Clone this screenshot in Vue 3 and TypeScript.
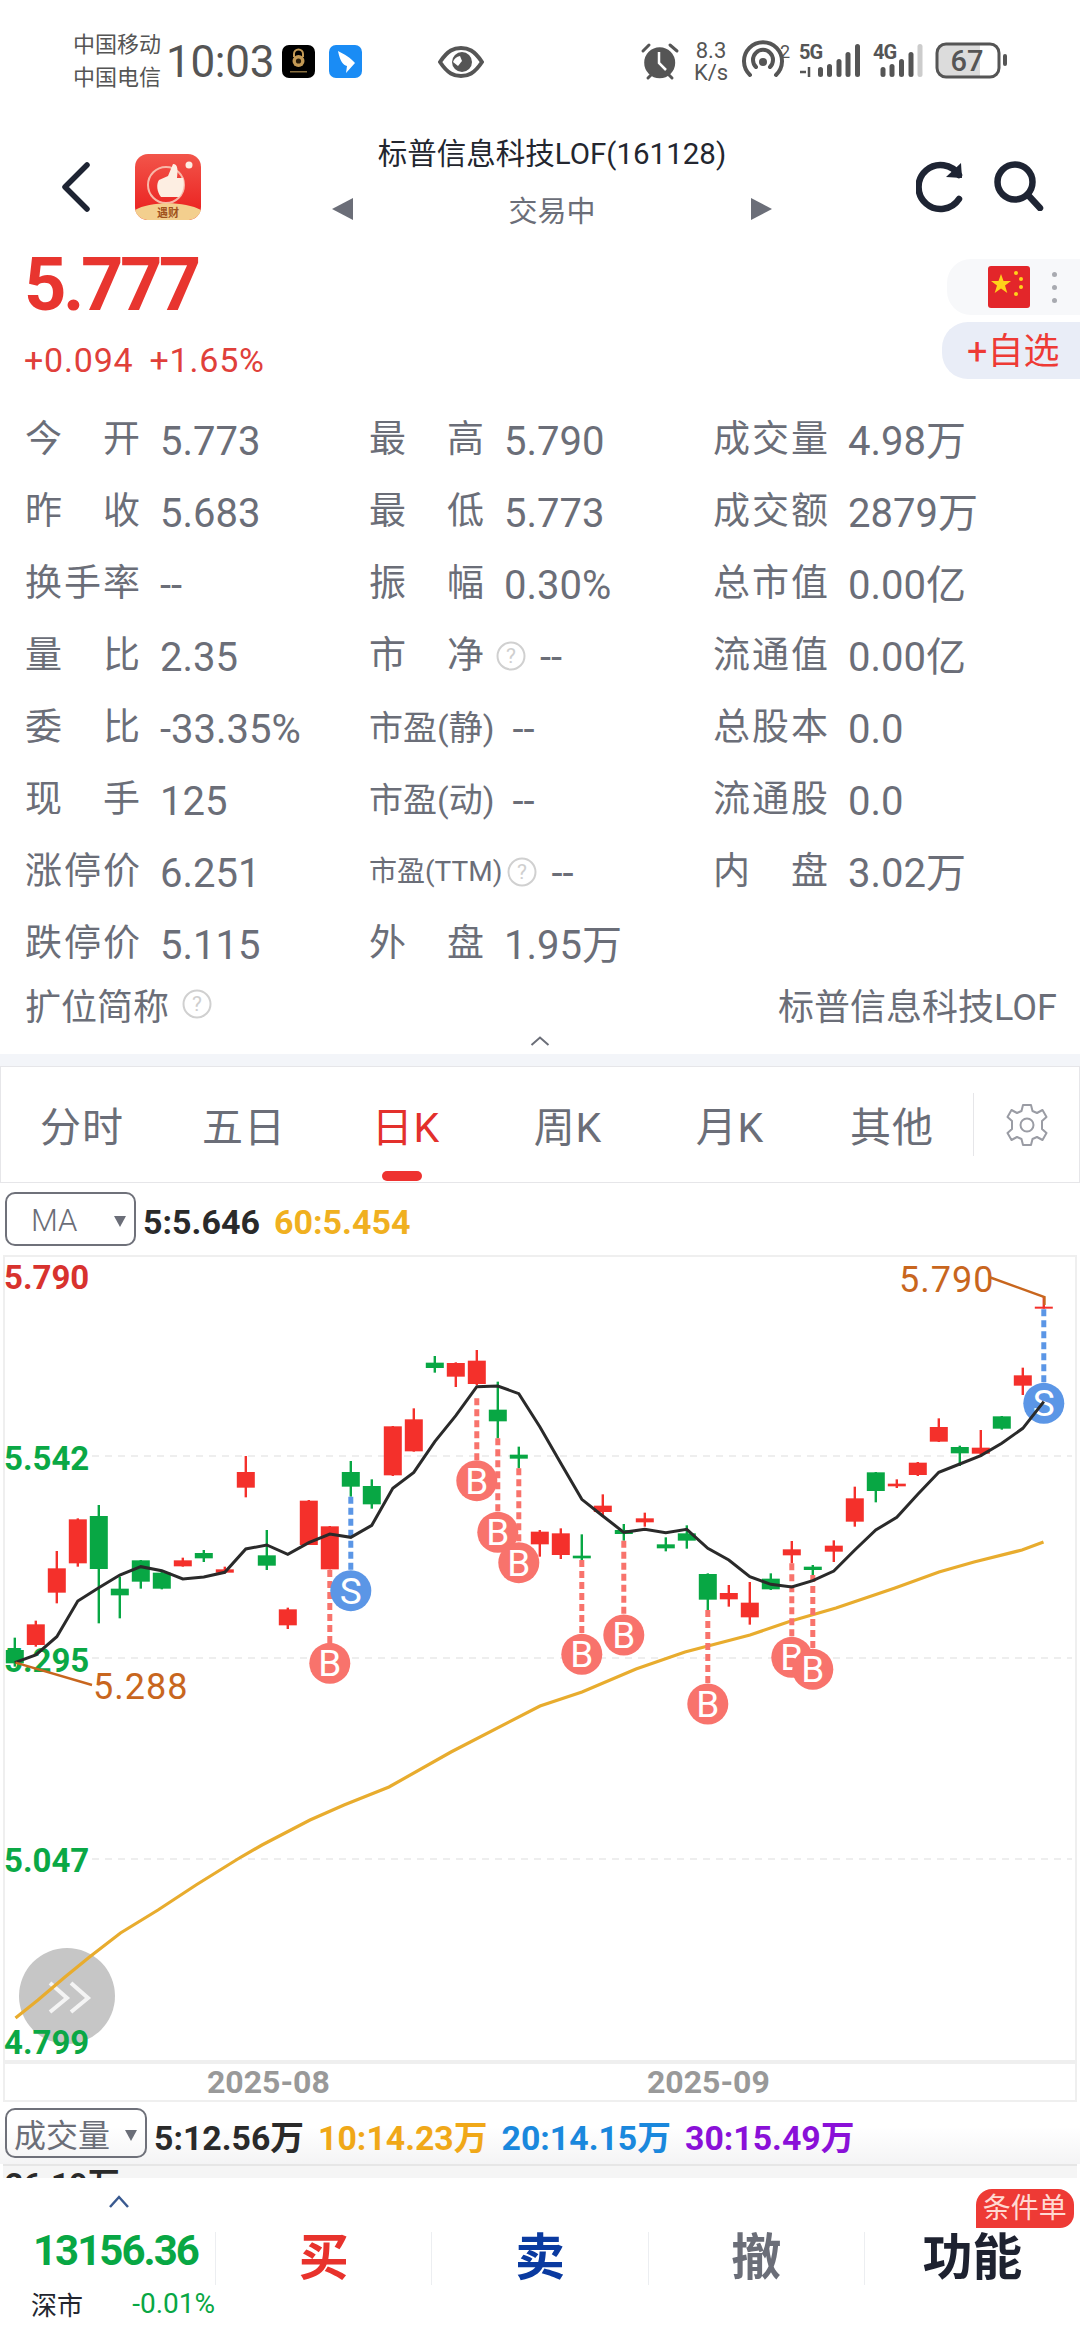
<script setup lang="ts">
interface Cell {
  label: string;
  value: string;
  kind?: 'free' | 'tiny';
  help?: boolean;
}

const cells: (Cell | null)[] = [
  { label: '今开', value: '5.773' },
  { label: '最高', value: '5.790' },
  { label: '成交量', value: '4.98万' },
  { label: '昨收', value: '5.683' },
  { label: '最低', value: '5.773' },
  { label: '成交额', value: '2879万' },
  { label: '换手率', value: '--' },
  { label: '振幅', value: '0.30%' },
  { label: '总市值', value: '0.00亿' },
  { label: '量比', value: '2.35' },
  { label: '市净', value: '--', help: true },
  { label: '流通值', value: '0.00亿' },
  { label: '委比', value: '-33.35%' },
  { label: '市盈(静)', value: '--', kind: 'free' },
  { label: '总股本', value: '0.0' },
  { label: '现手', value: '125' },
  { label: '市盈(动)', value: '--', kind: 'free' },
  { label: '流通股', value: '0.0' },
  { label: '涨停价', value: '6.251' },
  { label: '市盈(TTM)', value: '--', kind: 'tiny', help: true },
  { label: '内盘', value: '3.02万' },
  { label: '跌停价', value: '5.115' },
  { label: '外盘', value: '1.95万' },
  null,
];

const tabs = ['分时', '五日', '日K', '周K', '月K', '其他'];

// candle y values were read off the 3x crop, so they stay in crop units
const toY = (z: number) => 1250 + z / 3;
const toX = (i: number) => 14.8 + 21 * i;

const rawCandles: [number, number, number, number, 'r' | 'g'][] = [
  [1163, 1200, 1240, 1250, 'g'], [1112, 1123, 1185, 1190, 'r'], [903, 955, 1028, 1060, 'r'],
  [805, 808, 940, 950, 'r'], [765, 798, 957, 1120, 'g'], [980, 1016, 1036, 1105, 'g'],
  [930, 931, 995, 1016, 'g'], [965, 968, 1016, 1018, 'g'], [923, 931, 949, 950, 'r'],
  [900, 909, 925, 936, 'g'], [950, 958, 968, 970, 'r'], [618, 666, 713, 742, 'r'],
  [840, 916, 947, 960, 'g'], [1073, 1078, 1126, 1137, 'r'], [750, 752, 885, 885, 'r'],
  [828, 829, 958, 958, 'r'], [633, 666, 710, 740, 'g'], [688, 708, 763, 776, 'g'],
  [528, 529, 676, 678, 'r'], [475, 508, 604, 605, 'r'], [318, 338, 354, 368, 'g'],
  [337, 339, 380, 411, 'r'], [300, 332, 402, 405, 'r'], [395, 479, 514, 565, 'g'],
  [590, 614, 626, 655, 'g'], [840, 845, 883, 920, 'r'], [835, 850, 915, 927, 'r'],
  [853, 917, 925, 930, 'g'], [733, 767, 786, 800, 'r'], [822, 840, 852, 872, 'g'],
  [788, 805, 817, 830, 'r'], [862, 883, 895, 904, 'g'], [826, 850, 872, 896, 'g'],
  [970, 972, 1049, 1080, 'g'], [1005, 1029, 1048, 1070, 'r'], [996, 1058, 1102, 1124, 'r'],
  [970, 986, 1018, 1020, 'g'], [873, 898, 916, 940, 'r'], [945, 950, 960, 975, 'g'],
  [871, 887, 905, 936, 'r'], [710, 745, 815, 830, 'r'], [666, 667, 723, 757, 'g'],
  [688, 701, 709, 714, 'r'], [636, 638, 675, 678, 'r'], [505, 531, 575, 576, 'r'],
  [587, 591, 610, 648, 'g'], [540, 593, 611, 620, 'r'], [498, 499, 536, 539, 'g'],
  [353, 376, 407, 435, 'r'], [140, 170, 176, 176, 'r'],
];

const candles = rawCandles.map(([hi, top, bottom, lo, side], i) => ({
  x: toX(i),
  hi: toY(hi),
  lo: toY(lo),
  top: toY(top),
  height: Math.max((bottom - top) / 3, 2),
  color: side === 'r' ? '#f4302b' : '#08a744',
}));

const ma5Raw = [
  1238, 1215, 1160, 1053, 1013, 975, 950, 962, 987, 981, 967, 897, 885, 913, 878, 852, 862, 826, 715, 667,
  575, 497, 410, 408, 431, 530, 640, 748, 798, 847, 838, 848, 838, 895, 930, 980, 1003, 1011, 992, 963,
  900, 840, 802, 733, 667, 642, 617, 580, 535, 455,
];
const ma5 = ma5Raw.map((z, i) => `${toX(i)},${toY(z)}`).join(' ');

const ma60 =
  '15.5,2018 38,2000 65,1977 89.5,1957 120.5,1933 158,1910 196,1885 241,1857 262,1845 310,1820 344,1805 389,1787 451,1752 540,1706 582,1692 636,1669 685,1652 750,1635 791,1621 836,1608 895,1588 939,1572 974,1562 1022,1550 1043.5,1542';

const signals: { i: number; kind: 'B' | 'S'; from: number; to: number; cy: number }[] = [
  { i: 15, kind: 'B', from: 960, to: 1180, cy: 1240 },
  { i: 16, kind: 'S', from: 740, to: 962, cy: 1022 },
  { i: 22, kind: 'B', from: 445, to: 632, cy: 692 },
  { i: 23, kind: 'B', from: 565, to: 785, cy: 847 },
  { i: 24, kind: 'B', from: 655, to: 878, cy: 938 },
  { i: 27, kind: 'B', from: 930, to: 1150, cy: 1213 },
  { i: 29, kind: 'B', from: 872, to: 1092, cy: 1155 },
  { i: 33, kind: 'B', from: 1080, to: 1300, cy: 1362 },
  { i: 37, kind: 'B', from: 940, to: 1160, cy: 1222 },
  { i: 38, kind: 'B', from: 975, to: 1197, cy: 1258 },
  { i: 49, kind: 'S', from: 178, to: 400, cy: 460 },
];
const signalColor = (kind: string) => (kind === 'B' ? '#f8736c' : '#5b96e6');

const axisLabels = [
  { text: '5.790', y: 1289, color: '#d8322e' },
  { text: '5.542', y: 1470, color: '#0aa845' },
  { text: '5.295', y: 1672, color: '#0aa845' },
  { text: '5.047', y: 1872, color: '#0aa845' },
  { text: '4.799', y: 2054, color: '#0aa845' },
];
const gridLines = [1456, 1658, 1859];

const volumes = [
  { text: '5:12.56万', color: '#2a2a2a' },
  { text: '10:14.23万', color: '#f0a818' },
  { text: '20:14.15万', color: '#1a88dd' },
  { text: '30:15.49万', color: '#8a10d8' },
];
</script>

<template>
  <div class="screen">
    <div class="status">
      <div class="carriers">
        <span>中国移动</span>
        <span>中国电信</span>
      </div>
      <span class="clock">10:03</span>
      <svg class="app-mini" width="33" height="33" viewBox="0 0 33 33">
        <rect width="33" height="33" rx="7" fill="#000" />
        <path d="M12 12 V9 a4.5 4.5 0 0 1 9 0 V12" fill="none" stroke="#c49a55" stroke-width="2" />
        <circle cx="16.5" cy="16" r="6" fill="#c49a55" />
        <circle cx="16.5" cy="16" r="2.6" fill="#2a1d0a" />
        <rect x="8" y="26" width="17" height="1.5" fill="#8a7040" />
      </svg>
      <svg class="app-mini gap" width="33" height="33" viewBox="0 0 33 33">
        <rect width="33" height="33" rx="7" fill="#1a8cf5" />
        <path d="M9 6 C15 9 22 13 26 18 L17 28 L18 21 C14 20 11 16 9 6 Z" fill="#fff" />
      </svg>
      <svg class="eye" width="46" height="32" viewBox="0 0 46 32">
        <path d="M2 16 C10 4 16 2 23 2 C30 2 36 4 44 16 C36 28 30 30 23 30 C16 30 10 28 2 16 Z" fill="none" stroke="#555" stroke-width="4" />
        <circle cx="24" cy="16" r="10" fill="#555" />
        <path d="M15 16 a9 9 0 0 1 7 -6 l2 5 -4 5 Z" fill="#fff" />
      </svg>
      <svg class="sys-icons" width="400" height="100" viewBox="0 0 400 100">
        <g fill="#555" stroke="#555">
          <circle cx="40.7" cy="42.7" r="15.5" stroke="none" />
          <path d="M24 31 L30 25 M51 25 L58 31 M29 58 L33 54 M49 54 L53 58" stroke-width="3" stroke-linecap="round" fill="none" />
        </g>
        <path d="M40 32 V43 L47 50" fill="none" stroke="#fff" stroke-width="2.5" />
        <text x="92" y="38" class="sys-text" text-anchor="middle">8.3</text>
        <text x="92" y="60" class="sys-text" text-anchor="middle">K/s</text>
        <path d="M131 55 A19 19 0 1 1 157 55 M137 47 A10 10 0 1 1 151 47" fill="none" stroke="#555" stroke-width="4" stroke-linecap="round" />
        <circle cx="144" cy="42" r="4" fill="#555" />
        <text x="161" y="38" class="sys-tiny">2</text>
        <text x="180" y="39" class="sys-bold">5G</text>
        <path d="M181 52 H187 M190 47 V57" stroke="#555" stroke-width="2.5" fill="none" />
        <g fill="#555">
          <rect x="199" y="47" width="5" height="10" rx="2.5" />
          <rect x="208" y="44" width="5" height="13" rx="2.5" />
          <rect x="217.5" y="39" width="5" height="18" rx="2.5" />
          <rect x="226.5" y="32" width="5" height="25" rx="2.5" />
          <rect x="236" y="24" width="5" height="33" rx="2.5" />
          <rect x="261.5" y="47" width="5" height="10" rx="2.5" />
          <rect x="270.5" y="44" width="5" height="13" rx="2.5" />
          <rect x="280" y="39" width="5" height="18" rx="2.5" />
          <rect x="289.5" y="32" width="5" height="25" rx="2.5" />
        </g>
        <rect x="298.5" y="24" width="5" height="33" rx="2.5" fill="#ccc" />
        <text x="254" y="39" class="sys-bold">4G</text>
        <path d="M327 24.5 H361 V56 H327 A9 9 0 0 1 318 47 V33 A9 9 0 0 1 327 24.5 Z" fill="#dcdcdc" />
        <rect x="318" y="24" width="62" height="33" rx="9" fill="none" stroke="#555" stroke-width="3" />
        <text x="348" y="51" class="sys-batt" text-anchor="middle">67</text>
        <rect x="384" y="34" width="4" height="12" rx="2" fill="#555" />
      </svg>
    </div>

    <div class="header">
      <div class="head-left">
        <svg class="back" width="30" height="50" viewBox="0 0 30 50">
          <path d="M26 3 L4 25 L26 47" fill="none" stroke="#1e2433" stroke-width="5.5" stroke-linecap="round" stroke-linejoin="round" />
        </svg>
        <svg class="app-icon" width="66" height="66" viewBox="0 0 66 66">
          <defs>
            <linearGradient id="redbg" x1="0" y1="0" x2="0" y2="1">
              <stop offset="0" stop-color="#f2554a" />
              <stop offset="1" stop-color="#ea1c1c" />
            </linearGradient>
          </defs>
          <rect width="66" height="66" rx="13" fill="url(#redbg)" />
          <circle cx="31" cy="31" r="18" fill="none" stroke="#f8b8a8" stroke-width="2" />
          <path d="M24 26 L33 22 L38 10 C43 10 43 16 42 24 L48 24 C50 30 48 40 44 43 L26 43 C22 38 21 30 24 26 Z" fill="#fdeee2" />
          <circle cx="54" cy="11" r="3.5" fill="#fdeee2" />
          <path d="M0 56 C15 47 50 47 66 56 V53 V56 A13 13 0 0 1 53 66 H13 A13 13 0 0 1 0 56 Z" fill="#f3cf8e" />
          <text x="33" y="63" class="app-caption" text-anchor="middle">遇财</text>
        </svg>
      </div>
      <div class="head-mid">
        <div class="title">标普信息科技LOF(161128)</div>
        <div class="sub-row">
          <span class="arrow arrow-left"></span>
          <span class="trade-state">交易中</span>
          <span class="arrow arrow-right"></span>
        </div>
      </div>
      <div class="head-right">
        <svg width="48" height="52" viewBox="0 0 48 52">
          <path d="M43 14 A22 22 0 1 0 43 38" fill="none" stroke="#1e2433" stroke-width="6.5" stroke-linecap="round" />
          <path d="M30 16 L46 17 L45 2 Z" fill="#1e2433" />
        </svg>
        <svg class="search" width="50" height="50" viewBox="0 0 50 50">
          <circle cx="21" cy="21" r="17.5" fill="none" stroke="#1e2433" stroke-width="6.5" />
          <path d="M34 34 L46 47" stroke="#1e2433" stroke-width="6.5" stroke-linecap="round" />
        </svg>
      </div>
    </div>

    <div class="quote">
      <div class="quote-left">
        <div class="price">5.777</div>
        <div class="change">
          <span>+0.094</span>
          <span>+1.65%</span>
        </div>
      </div>
      <div class="quote-right">
        <div class="flag-pill">
          <svg width="42" height="42" viewBox="0 0 42 42">
            <rect width="42" height="42" rx="3" fill="#e3262a" />
            <path d="M13 8 L15.5 15 L23 15 L17 19.5 L19.3 27 L13 22.5 L6.7 27 L9 19.5 L3 15 L10.5 15 Z" fill="#ffd21a" />
            <circle cx="28" cy="7" r="2" fill="#ffd21a" />
            <circle cx="33" cy="13" r="2" fill="#ffd21a" />
            <circle cx="33" cy="21" r="2" fill="#ffd21a" />
            <circle cx="28" cy="28" r="2" fill="#ffd21a" />
          </svg>
          <div class="dots"><i></i><i></i><i></i></div>
        </div>
        <div class="watch-pill">+自选</div>
      </div>
    </div>

    <div class="stats">
      <template v-for="(cell, idx) in cells" :key="idx">
        <div v-if="cell" class="cell">
          <span class="label" :class="cell.kind">{{ cell.label }}</span>
          <svg v-if="cell.help" class="help" width="30" height="30" viewBox="0 0 30 30">
            <circle cx="15" cy="15" r="13.5" fill="none" stroke="#d0d0d0" stroke-width="2" />
            <text x="15" y="22" class="help-mark" text-anchor="middle">?</text>
          </svg>
          <span class="value">{{ cell.value }}</span>
        </div>
        <div v-else></div>
      </template>
    </div>

    <div class="alias-row">
      <span class="alias-label">扩位简称</span>
      <svg class="help" width="30" height="30" viewBox="0 0 30 30">
        <circle cx="15" cy="15" r="13.5" fill="none" stroke="#d0d0d0" stroke-width="2" />
        <text x="15" y="22" class="help-mark" text-anchor="middle">?</text>
      </svg>
      <span class="alias-value">标普信息科技LOF</span>
    </div>

    <div class="fold">
      <svg width="20" height="10" viewBox="0 0 20 10">
        <path d="M1.5 9 L10 1.5 L18.5 9" fill="none" stroke="#6b6e78" stroke-width="2" />
      </svg>
    </div>
    <div class="band"></div>

    <div class="tabs">
      <div v-for="tab in tabs" :key="tab" class="tab" :class="{ active: tab === '日K' }">
        {{ tab }}
      </div>
      <div class="gear-cell">
        <svg width="44" height="44" viewBox="0 0 44 44">
          <path d="M18 2 H26 L27.5 8 L32 10 L37.5 7 L41.5 14 L37 18 V26 L41.5 30 L37.5 37 L32 34 L27.5 36 L26 42 H18 L16.5 36 L12 34 L6.5 37 L2.5 30 L7 26 V18 L2.5 14 L6.5 7 L12 10 L16.5 8 Z" fill="none" stroke="#9a9ca4" stroke-width="2" stroke-linejoin="round" />
          <circle cx="22" cy="22" r="6.5" fill="none" stroke="#9a9ca4" stroke-width="2" />
        </svg>
      </div>
    </div>

    <div class="ma-row">
      <div class="picker ma-picker">
        <span>MA</span>
        <i class="caret"></i>
      </div>
      <span class="ma-val dark">5:5.646</span>
      <span class="ma-val gold">60:5.454</span>
    </div>

    <div class="chart">
      <svg class="chart-svg" width="1080" height="807" viewBox="0 1255 1080 807">
        <rect x="4" y="1256" width="1072" height="805" fill="none" stroke="#efefef" stroke-width="2" />
        <line v-for="g in gridLines" :key="g" x1="92" x2="1072" :y1="g" :y2="g" stroke="#e9e9e9" stroke-width="1.5" stroke-dasharray="7 6" />
        <circle cx="67" cy="1996" r="48" fill="#c6c6c6" />
        <path d="M50 1983 L67 1998 L50 2012 M71 1983 L88 1998 L71 2012" fill="none" stroke="#fff" stroke-opacity="0.8" stroke-width="4" />
        <text v-for="a in axisLabels" :key="a.text" x="4" :y="a.y" class="axis" :fill="a.color">{{ a.text }}</text>
        <g v-for="(c, i) in candles" :key="i">
          <line :x1="c.x" :x2="c.x" :y1="c.hi" :y2="c.lo" :stroke="c.color" stroke-width="2.4" />
          <rect :x="c.x - 9" :y="c.top" width="18" :height="c.height" :fill="c.color" />
        </g>
        <polyline :points="ma60" fill="none" stroke="#e8ac2e" stroke-width="3.2" />
        <g v-for="s in signals" :key="s.i">
          <line :x1="toX(s.i)" :x2="toX(s.i)" :y1="toY(s.from)" :y2="toY(s.to)" :stroke="signalColor(s.kind)" stroke-width="5" stroke-dasharray="7 4" />
          <circle :cx="toX(s.i)" :cy="toY(s.cy)" r="20.5" :fill="signalColor(s.kind)" />
          <text :x="toX(s.i)" :y="toY(s.cy) + 13" class="sig" text-anchor="middle">{{ s.kind }}</text>
        </g>
        <polyline :points="ma5" fill="none" stroke="#2a2a2a" stroke-width="3" />
        <path d="M15.5 1662.7 L92 1685" stroke="#c8661e" stroke-width="2.4" />
        <text x="93" y="1699" class="mark">5.288</text>
        <path d="M989 1277 L1044.5 1297 V1305" fill="none" stroke="#c8661e" stroke-width="2.4" />
        <text x="899" y="1292" class="mark">5.790</text>
      </svg>
    </div>

    <div class="date-axis">
      <span class="date d1">2025-08</span>
      <span class="date d2">2025-09</span>
    </div>

    <div class="vol-row">
      <div class="picker vol-picker">
        <span>成交量</span>
        <i class="caret"></i>
      </div>
      <span v-for="v in volumes" :key="v.text" class="vol-val" :style="{ color: v.color }">{{ v.text }}</span>
    </div>

    <div class="vol-chart">
      <span class="vol-top">26.19万</span>
    </div>

    <div class="bottom">
      <div class="market">
        <svg class="market-up" width="22" height="13" viewBox="0 0 22 13">
          <path d="M2 12 L11 2 L20 12" fill="none" stroke="#3a5a90" stroke-width="2.5" />
        </svg>
        <div class="index">13156.36</div>
        <div class="index-sub">
          <span class="index-name">深市</span>
          <span class="index-pct">-0.01%</span>
        </div>
      </div>
      <div class="action buy">买</div>
      <div class="action sell">卖</div>
      <div class="action undo">撤</div>
      <div class="action more">
        功能
        <span class="badge">条件单</span>
      </div>
    </div>
  </div>
</template>

<style>
html,
body {
  margin: 0;
  background: #fff;
}
</style>

<style scoped>
.screen {
  width: 1080px;
  height: 2340px;
  overflow: hidden;
  background: #fff;
  display: flex;
  flex-direction: column;
  font-family: Roboto, "Noto Sans CJK SC", sans-serif;
  color: #6b6e78;
}

.status {
  height: 124px;
  flex: none;
  display: flex;
  align-items: flex-start;
  padding: 20px 0 0 73px;
  box-sizing: border-box;
  color: #555;
}

.carriers {
  display: flex;
  flex-direction: column;
  font-size: 22px;
  line-height: 33px;
  padding-top: 8px;
}

.clock {
  font-size: 44px;
  line-height: 44px;
  margin: 20px 0 0 5px;
  width: 108px;
  letter-spacing: -0.3px;
}

.app-mini {
  margin: 25px 0 0 8px;
}

.app-mini.gap {
  margin-left: 14px;
}

.eye {
  margin: 26px 0 0 76px;
}

.sys-icons {
  margin: 0 0 0 135px;
}

.sys-text {
  font-size: 22px;
  fill: #555;
}

.sys-tiny {
  font-size: 18px;
  fill: #555;
}

.sys-bold {
  font-size: 20px;
  font-weight: 700;
  fill: #555;
  letter-spacing: -1px;
}

.sys-batt {
  font-size: 29px;
  font-weight: 500;
  fill: #555;
}

.header {
  height: 130px;
  flex: none;
  display: flex;
}

.head-left {
  width: 332px;
  display: flex;
  align-items: flex-start;
  padding: 30px 0 0 61px;
  box-sizing: border-box;
}

.back {
  margin-top: 8px;
}

.app-icon {
  margin-left: 44px;
}

.head-mid {
  width: 440px;
  display: flex;
  flex-direction: column;
  align-items: stretch;
}

.title {
  text-align: center;
  font-size: 29.5px;
  line-height: 40px;
  color: #23262f;
  margin-top: 10px;
  white-space: nowrap;
}

.sub-row {
  display: flex;
  justify-content: space-between;
  align-items: center;
  margin-top: 15px;
  height: 40px;
}

.trade-state {
  font-size: 29px;
  color: #6b6e78;
}

.arrow {
  width: 0;
  height: 0;
  border-top: 11px solid transparent;
  border-bottom: 11px solid transparent;
}

.arrow-left {
  border-right: 21px solid #6b6e78;
}

.arrow-right {
  border-left: 21px solid #6b6e78;
}

.head-right {
  flex: 1;
  display: flex;
  align-items: flex-start;
  justify-content: flex-end;
  padding: 37px 36px 0 0;
}

.search {
  margin-left: 30px;
}

.quote {
  height: 150px;
  flex: none;
  display: flex;
  justify-content: space-between;
}

.quote-left {
  padding: 0 0 0 24px;
}

.price {
  font-size: 74px;
  line-height: 62px;
  font-weight: 700;
  color: #e8352f;
  letter-spacing: -3.5px;
}

.change {
  display: flex;
  gap: 16px;
  font-size: 34px;
  line-height: 40px;
  color: #e0403a;
  margin-top: 24px;
  letter-spacing: 0.8px;
}

.quote-right {
  padding-top: 5px;
  display: flex;
  flex-direction: column;
  align-items: flex-end;
  gap: 7px;
}

.flag-pill {
  width: 133px;
  height: 56px;
  box-sizing: border-box;
  background: #f7f8fa;
  border-radius: 24px 0 0 24px;
  display: flex;
  align-items: center;
  padding-left: 41px;
}

.dots {
  margin-left: 22px;
  display: flex;
  flex-direction: column;
  gap: 8px;
}

.dots i {
  width: 5px;
  height: 5px;
  border-radius: 50%;
  background: #a8aab0;
}

.watch-pill {
  width: 138px;
  height: 57px;
  box-sizing: border-box;
  background: #e9edf7;
  border-radius: 26px 0 0 26px;
  color: #ee3a35;
  font-size: 36px;
  line-height: 60px;
  padding-left: 25px;
}

.stats {
  flex: none;
  height: 576px;
  display: grid;
  grid-template-columns: repeat(3, 344px);
  grid-auto-rows: 72px;
  padding-left: 25px;
}

.cell {
  display: flex;
  align-items: center;
  font-size: 40px;
  white-space: nowrap;
}

.label {
  width: 115px;
  flex: none;
  font-size: 37px;
  line-height: 46px;
  text-align-last: justify;
  margin: 0 20px 0 0;
}

.value {
  line-height: 46px;
  margin-top: 3px;
}

.label.free {
  width: auto;
  font-size: 34px;
  text-align-last: auto;
  margin-right: 18px;
}

.label.tiny {
  width: auto;
  font-size: 28px;
  text-align-last: auto;
  margin-right: 13px;
}

.help {
  flex: none;
  margin: 0 14px 0 -8px;
}

.help-mark {
  font-size: 21px;
  fill: #cfcfcf;
}

.alias-row {
  flex: none;
  height: 48px;
  display: flex;
  align-items: center;
  padding: 0 23px 0 25px;
  font-size: 36px;
}

.alias-row .help {
  margin: 0 0 0 13px;
}

.alias-value {
  margin-left: auto;
}

.fold {
  flex: none;
  height: 26px;
  display: flex;
  align-items: flex-start;
  justify-content: center;
  padding-top: 8px;
  box-sizing: border-box;
}

.band {
  flex: none;
  height: 12px;
  background: #f3f5f9;
}

.tabs {
  flex: none;
  height: 117px;
  display: flex;
  box-sizing: border-box;
  border: 1px solid #e6e6e9;
  position: relative;
}

.tab {
  width: 162px;
  flex: none;
  text-align: center;
  font-size: 41px;
  line-height: 122px;
  letter-spacing: 1px;
  color: #6b6e78;
  position: relative;
}

.tab.active {
  color: #e3302c;
}

.tab.active::after {
  content: "";
  position: absolute;
  left: 57px;
  top: 104px;
  width: 40px;
  height: 10px;
  border-radius: 5px;
  background: #ee3230;
}

.gear-cell {
  flex: 1;
  margin: 26px 0;
  border-left: 1px solid #e6e6e9;
  display: flex;
  align-items: center;
  justify-content: center;
}

.ma-row {
  flex: none;
  height: 72px;
  display: flex;
  align-items: center;
  padding-left: 5px;
}

.picker {
  box-sizing: border-box;
  border: 2px solid #6f717a;
  border-radius: 10px;
  display: flex;
  align-items: center;
  position: relative;
  color: #6b6e78;
  flex: none;
}

.ma-picker {
  width: 131px;
  height: 54px;
  font-size: 31px;
  padding: 3px 0 0 24px;
  margin-right: 7px;
  font-weight: 300;
}

.caret {
  position: absolute;
  right: 8px;
  top: 50%;
  margin-top: -3px;
  border-left: 6px solid transparent;
  border-right: 6px solid transparent;
  border-top: 11px solid #6b6e78;
}

.ma-val {
  font-size: 34px;
  font-weight: 700;
  margin: 6px 14px 0 0;
}

.dark {
  color: #2a2a2a;
}

.gold {
  color: #f0b020;
}

.chart {
  flex: none;
  height: 807px;
}

.chart-svg {
  display: block;
}

.axis {
  font-size: 33px;
  font-weight: 700;
}

.sig {
  font-size: 37px;
  fill: #fff;
}

.mark {
  font-size: 36px;
  fill: #c8661e;
  letter-spacing: 1px;
}

.date-axis {
  flex: none;
  height: 40px;
  margin: 0 3px;
  box-sizing: border-box;
  border: 2px solid #efefef;
  position: relative;
  display: flex;
  align-items: center;
}

.date {
  font-size: 32px;
  font-weight: 700;
  color: #999;
  width: 121px;
  white-space: nowrap;
}

.d1 {
  margin-left: 202px;
}

.d2 {
  margin-left: 319px;
}

.vol-row {
  flex: none;
  height: 62px;
  display: flex;
  align-items: center;
  padding-left: 5px;
  background: linear-gradient(#fff 40%, #f4f4f5);
}

.vol-picker {
  width: 142px;
  height: 50px;
  font-size: 32px;
  padding-left: 7px;
  margin-right: 7px;
}

.vol-val {
  font-size: 33.8px;
  font-weight: 700;
  margin: 4px 14px 0 0;
  white-space: nowrap;
}

.vol-chart {
  flex: none;
  height: 14px;
  overflow: hidden;
  margin: 0 3px;
  border-top: 2px solid #e6e6e6;
  box-sizing: border-box;
  background: #f5f5f5;
}

.vol-top {
  display: block;
  font-size: 32px;
  font-weight: 700;
  line-height: 36px;
  color: #2a2a2a;
  padding-left: 2px;
}

.bottom {
  flex: 1;
  background: #fff;
  display: flex;
  align-items: flex-start;
  padding-top: 54px;
  position: relative;
}

.market {
  width: 215px;
  height: 53px;
  flex: none;
  border-right: 1px solid #eceef1;
  position: relative;
}

.market-up {
  position: absolute;
  left: 108px;
  top: -37px;
}

.index {
  position: absolute;
  left: 33px;
  top: -6px;
  font-size: 42px;
  font-weight: 700;
  line-height: 50px;
  color: #08a744;
  letter-spacing: -2px;
}

.index-sub {
  position: absolute;
  left: 31px;
  top: 53px;
  width: 184px;
  display: flex;
  justify-content: space-between;
  align-items: center;
}

.index-name {
  font-size: 26px;
  color: #23262f;
}

.index-pct {
  font-size: 28px;
  color: #08a744;
}

.action {
  flex: 1;
  height: 53px;
  text-align: center;
  font-size: 50px;
  font-weight: 700;
  line-height: 53px;
  border-right: 1px solid #eceef1;
  position: relative;
}

.action.more {
  border-right: none;
  color: #1e2230;
}

.buy {
  color: #e8322c;
}

.sell {
  color: #0a3aa0;
}

.undo {
  color: #6b6e78;
}

.badge {
  position: absolute;
  left: 111px;
  top: -43px;
  width: 98px;
  height: 39px;
  border-radius: 16px 16px 14px 0;
  background: #ee3a35;
  color: #ffd9d2;
  font-size: 28px;
  font-weight: 400;
  line-height: 39px;
  text-align: center;
}

.app-caption {
  font-size: 11px;
  fill: #a0521c;
  font-weight: 700;
}
</style>
